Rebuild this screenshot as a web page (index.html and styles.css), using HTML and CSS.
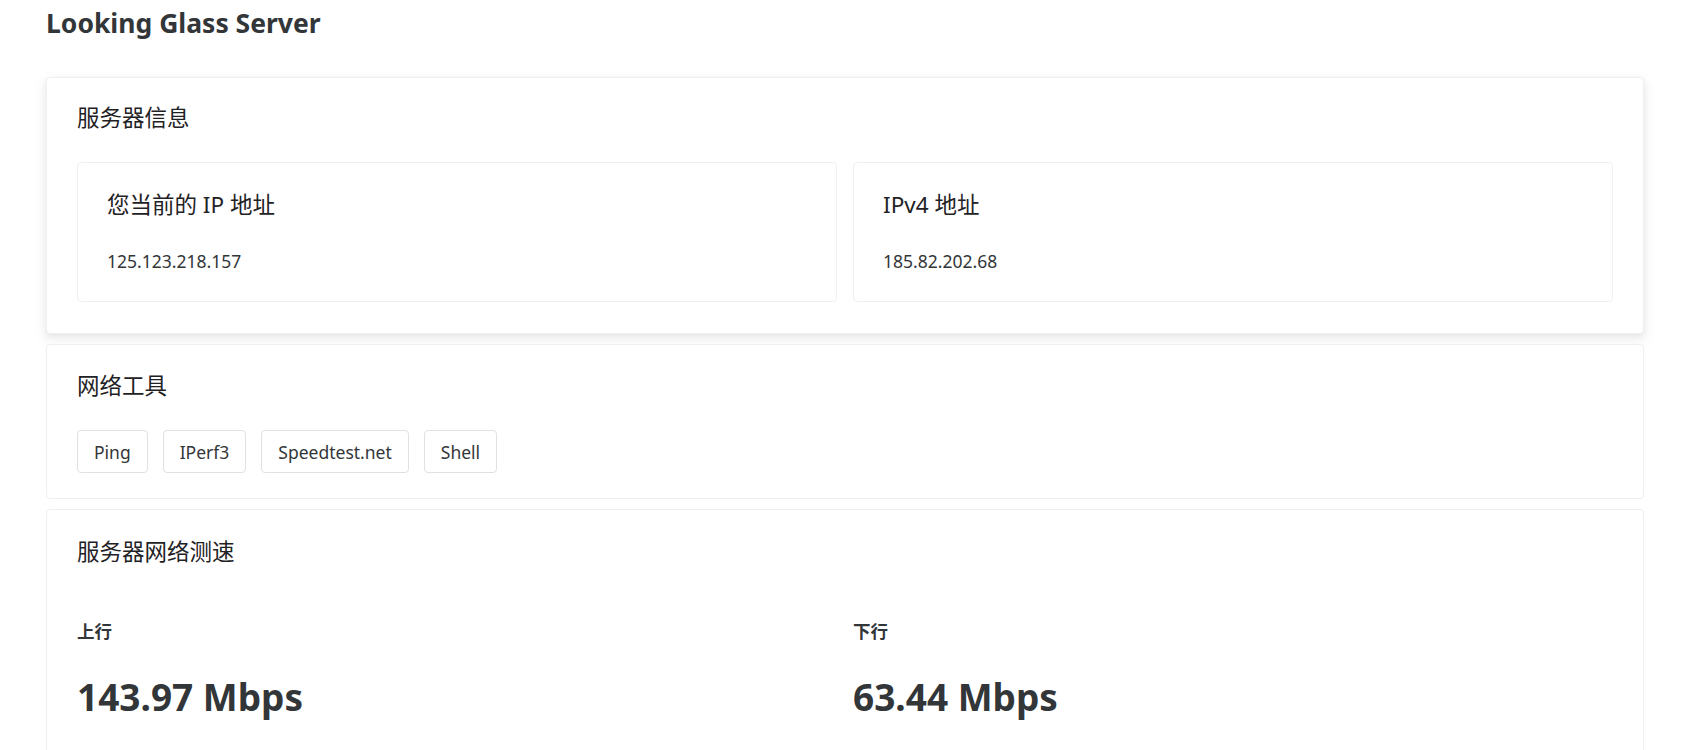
FILE: index.html
```html
<!DOCTYPE html>
<html lang="zh-CN">
<head>
<meta charset="utf-8">
<title>Looking Glass Server</title>
<link rel="stylesheet" href="styles.css">
</head>
<body>
<div class="page">
  <h1 class="page-title">Looking Glass Server</h1>

  <section class="card card-info">
    <h2 class="card-title">服务器信息</h2>
    <div class="info-grid">
      <div class="info-box">
        <h3 class="info-title">您当前的 IP 地址</h3>
        <div class="info-value">125.123.218.157</div>
      </div>
      <div class="info-box">
        <h3 class="info-title">IPv4 地址</h3>
        <div class="info-value">185.82.202.68</div>
      </div>
    </div>
  </section>

  <section class="card card-tools">
    <h2 class="card-title">网络工具</h2>
    <div class="tool-row">
      <button class="tool-btn">Ping</button>
      <button class="tool-btn">IPerf3</button>
      <button class="tool-btn">Speedtest.net</button>
      <button class="tool-btn">Shell</button>
    </div>
  </section>

  <section class="card card-speed">
    <h2 class="card-title">服务器网络测速</h2>
    <div class="stat-grid">
      <div class="stat">
        <div class="stat-label">上行</div>
        <div class="stat-value">143.97 Mbps</div>
      </div>
      <div class="stat">
        <div class="stat-label">下行</div>
        <div class="stat-value">63.44 Mbps</div>
      </div>
    </div>
  </section>
</div>
</body>
</html>
```

FILE: styles.css
```css
* { box-sizing: border-box; }

html, body {
  margin: 0;
  padding: 0;
  background: #ffffff;
}

body {
  font-family: "Noto Sans", "Noto Sans CJK SC", sans-serif;
  font-size: 17.5px;
  line-height: 1.6;
  color: #333639;
}

.page {
  padding: 1px 43px 40px 46px;
}

.page-title {
  margin: 0 0 32px;
  font-size: 26.5px;
  line-height: 44px;
  font-weight: 700;
  color: #333639;
}

.card {
  background: #fff;
  border: 1px solid #efeff5;
  border-radius: 4px;
  padding: 20px 30px 30px;
  margin-bottom: 10px;
}

.card-info {
  padding-top: 22px;
  padding-bottom: 31px;
  box-shadow: 0 1px 2px -2px rgba(0,0,0,.08), 0 3px 6px 0 rgba(0,0,0,.06), 0 5px 12px 4px rgba(0,0,0,.04);
}

.card-tools {
  padding-top: 23px;
  padding-bottom: 25px;
}

.card-speed {
  padding-top: 24px;
}

.card-title {
  margin: 0;
  font-size: 22.5px;
  line-height: 36px;
  font-weight: 400;
  color: #1f2225;
}

.info-grid {
  margin-top: 26px;
  display: grid;
  grid-template-columns: 1fr 1fr;
  gap: 16px;
}

.info-box {
  border: 1px solid #efeff5;
  border-radius: 4px;
  padding: 24px 29px 26px;
}

.info-title {
  margin: 0 0 24px;
  font-size: 22.5px;
  line-height: 36px;
  font-weight: 400;
  color: #1f2225;
}

.info-value {
  line-height: 28px;
}

.tool-row {
  margin-top: 26px;
  display: flex;
  gap: 15px;
}

.tool-btn {
  height: 43px;
  padding: 0 16px;
  border: 1px solid #e0e0e6;
  border-radius: 4px;
  background: #fff;
  font-family: inherit;
  font-size: 17.5px;
  color: #333639;
}

.stat-grid {
  margin-top: 47px;
  display: grid;
  grid-template-columns: 1fr 1fr;
  gap: 16px;
}

.stat-label {
  font-weight: 700;
  line-height: 28px;
  color: #333639;
}

.stat-value {
  margin-top: 21px;
  font-size: 37px;
  line-height: 62px;
  font-weight: 700;
  color: #333639;
}
```
